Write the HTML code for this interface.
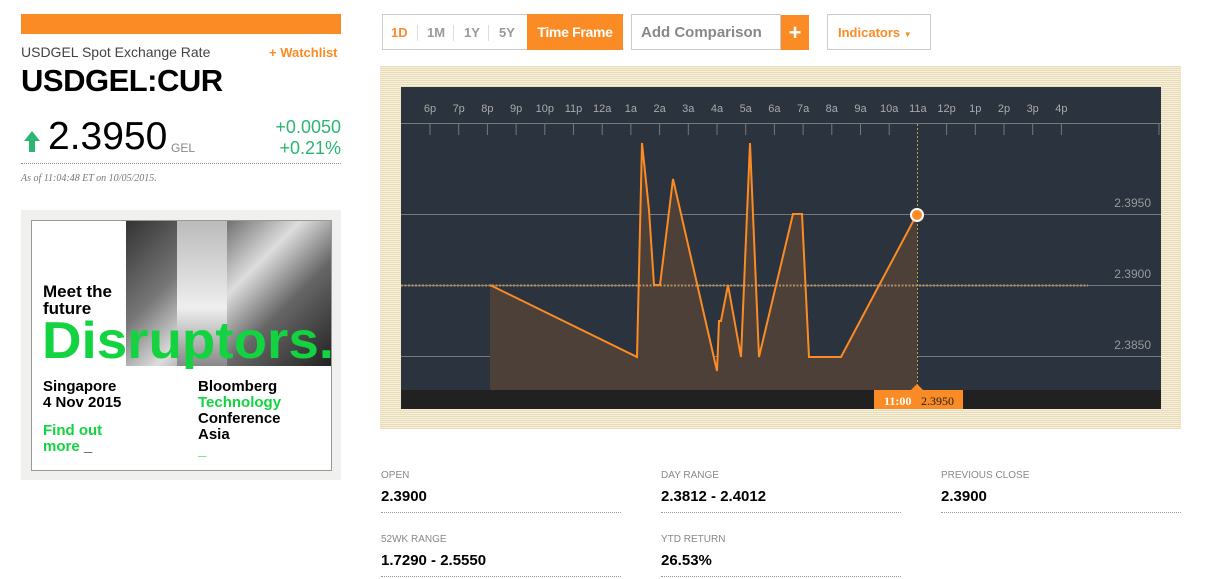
<!DOCTYPE html>
<html><head><style>
body{margin:0;width:1219px;height:579px;background:#fff;font-family:"Liberation Sans",sans-serif;position:relative;overflow:hidden}
.a{position:absolute}
.btn{position:absolute;top:14px;height:36px;box-sizing:border-box;border:1px solid #ccc;font-weight:bold;font-size:14px;line-height:34px}
.st .l{font-size:10px;color:#888;position:absolute}
.st .v{font-size:15px;font-weight:bold;color:#000;position:absolute}
.st .d{position:absolute;width:240px;border-top:1px dotted #999}
</style></head><body>
<div class="a" style="left:21px;top:14px;width:320px;height:20px;background:#fb8b24"></div>
<div class="a" style="left:21px;top:44px;font-size:14px;color:#444">USDGEL Spot Exchange Rate</div>
<div class="a" style="left:269px;top:45px;font-size:13px;color:#fb8b24;font-weight:bold">+ Watchlist</div>
<div class="a" style="left:21px;top:63px;font-size:31px;font-weight:bold;color:#000;letter-spacing:-0.5px">USDGEL:CUR</div>
<svg class="a" style="left:22px;top:129px" width="20" height="24"><path d="M10 2 L18 12 H13 V23 H7 V12 H2 Z" fill="#2bb673"/></svg>
<div class="a" style="left:48px;top:115px;font-size:39px;color:#000">2.3950</div>
<div class="a" style="left:171px;top:141px;font-size:12px;color:#888">GEL</div>
<div class="a" style="left:240px;top:117px;width:101px;text-align:right;font-size:18px;color:#2bb673;line-height:21px">+0.0050<br>+0.21%</div>
<div class="a" style="left:21px;top:163px;width:320px;border-top:1px dotted #888"></div>
<div class="a" style="left:21px;top:173px;font-size:10px;font-style:italic;color:#777;font-family:'Liberation Serif',serif">As of 11:04:48 ET on 10/05/2015.</div>
<div class="a" style="left:21px;top:210px;width:320px;height:270px;background:#f0f0ee"></div>
<div class="a" style="left:31px;top:220px;width:299px;height:249px;background:#fff;border:1px solid #999;overflow:hidden">
 <div class="a" style="left:94px;top:0;width:205px;height:145px;background:linear-gradient(135deg,#333 0%,#777 30%,#ddd 50%,#666 70%,#222 100%)"></div>
 <div class="a" style="left:145px;top:0;width:50px;height:145px;background:linear-gradient(#bbb,#eee 60%,#888)"></div>
 <div class="a" style="left:11px;top:62px;font-size:17px;font-weight:bold;line-height:17px;color:#000">Meet the<br>future</div>
 <svg class="a" style="left:0;top:80px" width="299" height="70"><text x="10" y="57" font-family="Liberation Sans" font-weight="bold" font-size="52" fill="#13d340" textLength="292" lengthAdjust="spacingAndGlyphs">Disruptors.</text></svg>
 <div class="a" style="left:11px;top:158px;font-size:15px;font-weight:bold;line-height:16px;color:#000">Singapore<br>4 Nov 2015</div>
 <div class="a" style="left:11px;top:202px;font-size:15px;font-weight:bold;line-height:16px;color:#13d340">Find out<br>more <span style="color:#000">_</span></div>
 <div class="a" style="left:166px;top:158px;font-size:15px;font-weight:bold;line-height:16px;color:#000">Bloomberg<br><span style="color:#13d340">Technology</span><br>Conference<br>Asia<br><span style="color:#13d340">_</span></div>
</div>
<div class="btn" style="left:382px;width:241px;border-color:#ccc"></div>
<div class="a" style="left:391px;top:25px;font-size:13px;font-weight:bold;color:#fb8b24">1D</div>
<div class="a" style="left:427px;top:25px;font-size:13px;font-weight:bold;color:#999">1M</div>
<div class="a" style="left:464px;top:25px;font-size:13px;font-weight:bold;color:#999">1Y</div>
<div class="a" style="left:499px;top:25px;font-size:13px;font-weight:bold;color:#999">5Y</div>
<div class="a" style="left:417px;top:25px;height:16px;border-left:1px solid #ddd"></div>
<div class="a" style="left:453px;top:25px;height:16px;border-left:1px solid #ddd"></div>
<div class="a" style="left:488px;top:25px;height:16px;border-left:1px solid #ddd"></div>
<div class="a" style="left:527px;top:14px;width:96px;height:36px;background:#fb8b24;color:#fff;font-weight:bold;font-size:14px;line-height:36px;text-align:center;letter-spacing:-0.3px">Time Frame</div>
<div class="btn" style="left:631px;width:150px;color:#888;font-size:15px;padding-left:9px;line-height:36px">Add Comparison</div>
<div class="a" style="left:781px;top:15px;width:28px;height:35px;background:#fb8b24;color:#fff;font-weight:bold;font-size:22px;line-height:35px;text-align:center">+</div>
<div class="btn" style="left:827px;width:104px;color:#fb8b24;font-size:13px;padding-left:10px;line-height:36px">Indicators <span style="font-size:8px">▼</span></div>
<div class="a" style="left:380px;top:66px;width:801px;height:363px;background:repeating-linear-gradient(0deg,#e8dcb8 0 1px,#f6f0dc 1px 2px)"></div>
<svg class="a" style="left:401px;top:87px" width="760" height="322" viewBox="401 87 760 322">
<rect x="401" y="87" width="760" height="322" fill="#2a333e"/>
<rect x="401" y="390" width="760" height="19" fill="#212121"/>
<g font-size="11" fill="#aaa" text-anchor="middle" font-family="Liberation Sans">
<text x="430" y="112">6p</text><text x="458.7" y="112">7p</text><text x="487.4" y="112">8p</text><text x="516.1" y="112">9p</text><text x="544.8" y="112">10p</text><text x="573.5" y="112">11p</text><text x="602.2" y="112">12a</text><text x="630.9" y="112">1a</text><text x="659.6" y="112">2a</text><text x="688.3" y="112">3a</text><text x="717" y="112">4a</text><text x="745.7" y="112">5a</text><text x="774.4" y="112">6a</text><text x="803.1" y="112">7a</text><text x="831.8" y="112">8a</text><text x="860.5" y="112">9a</text><text x="889.2" y="112">10a</text><text x="917.9" y="112">11a</text><text x="946.6" y="112">12p</text><text x="975.3" y="112">1p</text><text x="1004" y="112">2p</text><text x="1032.7" y="112">3p</text><text x="1061.4" y="112">4p</text>
</g>
<line x1="401" y1="123.5" x2="1161" y2="123.5" stroke="#777"/>
<path stroke="#777" d="M430 124v11M458.7 124v11M487.4 124v11M516.1 124v11M544.8 124v11M573.5 124v11M602.2 124v11M630.9 124v11M659.6 124v11M688.3 124v11M717 124v11M745.7 124v11M774.4 124v11M803.1 124v11M831.8 124v11M860.5 124v11M889.2 124v11M946.6 124v11M975.3 124v11M1004 124v11M1032.7 124v11M1061.4 124v11M1159 124v11"/>
<line x1="401" y1="214.5" x2="1161" y2="214.5" stroke="#777"/>
<line x1="401" y1="285.5" x2="1161" y2="285.5" stroke="#777"/>
<line x1="401" y1="356.5" x2="1161" y2="356.5" stroke="#777"/>
<g font-size="12" fill="#999" text-anchor="end" font-family="Liberation Sans"><text x="1151" y="207">2.3950</text><text x="1151" y="278">2.3900</text><text x="1151" y="349">2.3850</text></g>
<path d="M490 285 L637 357 L642 143 L649 210 L654 285 L660 285 L673 179 L717 371 L719 321 L721 321 L728 285 L741 357 L750 143 L759 357 L793 214 L802 214 L809 357 L841 357 L917 214 L917 390 L490 390Z" fill="#4c4039"/>
<line x1="401" y1="285.5" x2="1088" y2="285.5" stroke="#b09060" stroke-dasharray="2,1.5" stroke-width="2"/>
<line x1="917.5" y1="124" x2="917.5" y2="390" stroke="#c8a040" stroke-dasharray="2,2"/>
<path d="M490 285 L637 357 L642 143 L649 210 L654 285 L660 285 L673 179 L717 371 L719 321 L721 321 L728 285 L741 357 L750 143 L759 357 L793 214 L802 214 L809 357 L841 357 L917 214" fill="none" stroke="#fb8b24" stroke-width="2"/>
<circle cx="917" cy="215" r="6" fill="#fb8b24" stroke="#fff" stroke-width="2"/>
<rect x="874" y="390" width="89" height="19" fill="#fb8b24"/>
<path d="M911 390 L917 384 L923 390Z" fill="#fb8b24"/>
<text x="884" y="405" font-size="12" fill="#fff" font-weight="bold" font-family="Liberation Serif">11:00</text>
<text x="921" y="405" font-size="12" fill="#222" font-family="Liberation Serif">2.3950</text>
</svg>
<div class="st">
<div class="l" style="left:381px;top:470px">OPEN</div><div class="v" style="left:381px;top:488px">2.3900</div><div class="d" style="left:381px;top:512px"></div>
<div class="l" style="left:661px;top:470px">DAY RANGE</div><div class="v" style="left:661px;top:488px">2.3812 - 2.4012</div><div class="d" style="left:661px;top:512px"></div>
<div class="l" style="left:941px;top:470px">PREVIOUS CLOSE</div><div class="v" style="left:941px;top:488px">2.3900</div><div class="d" style="left:941px;top:512px"></div>
<div class="l" style="left:381px;top:534px">52WK RANGE</div><div class="v" style="left:381px;top:552px">1.7290 - 2.5550</div><div class="d" style="left:381px;top:576px"></div>
<div class="l" style="left:661px;top:534px">YTD RETURN</div><div class="v" style="left:661px;top:552px">26.53%</div><div class="d" style="left:661px;top:576px"></div>
</div>
</body></html>
